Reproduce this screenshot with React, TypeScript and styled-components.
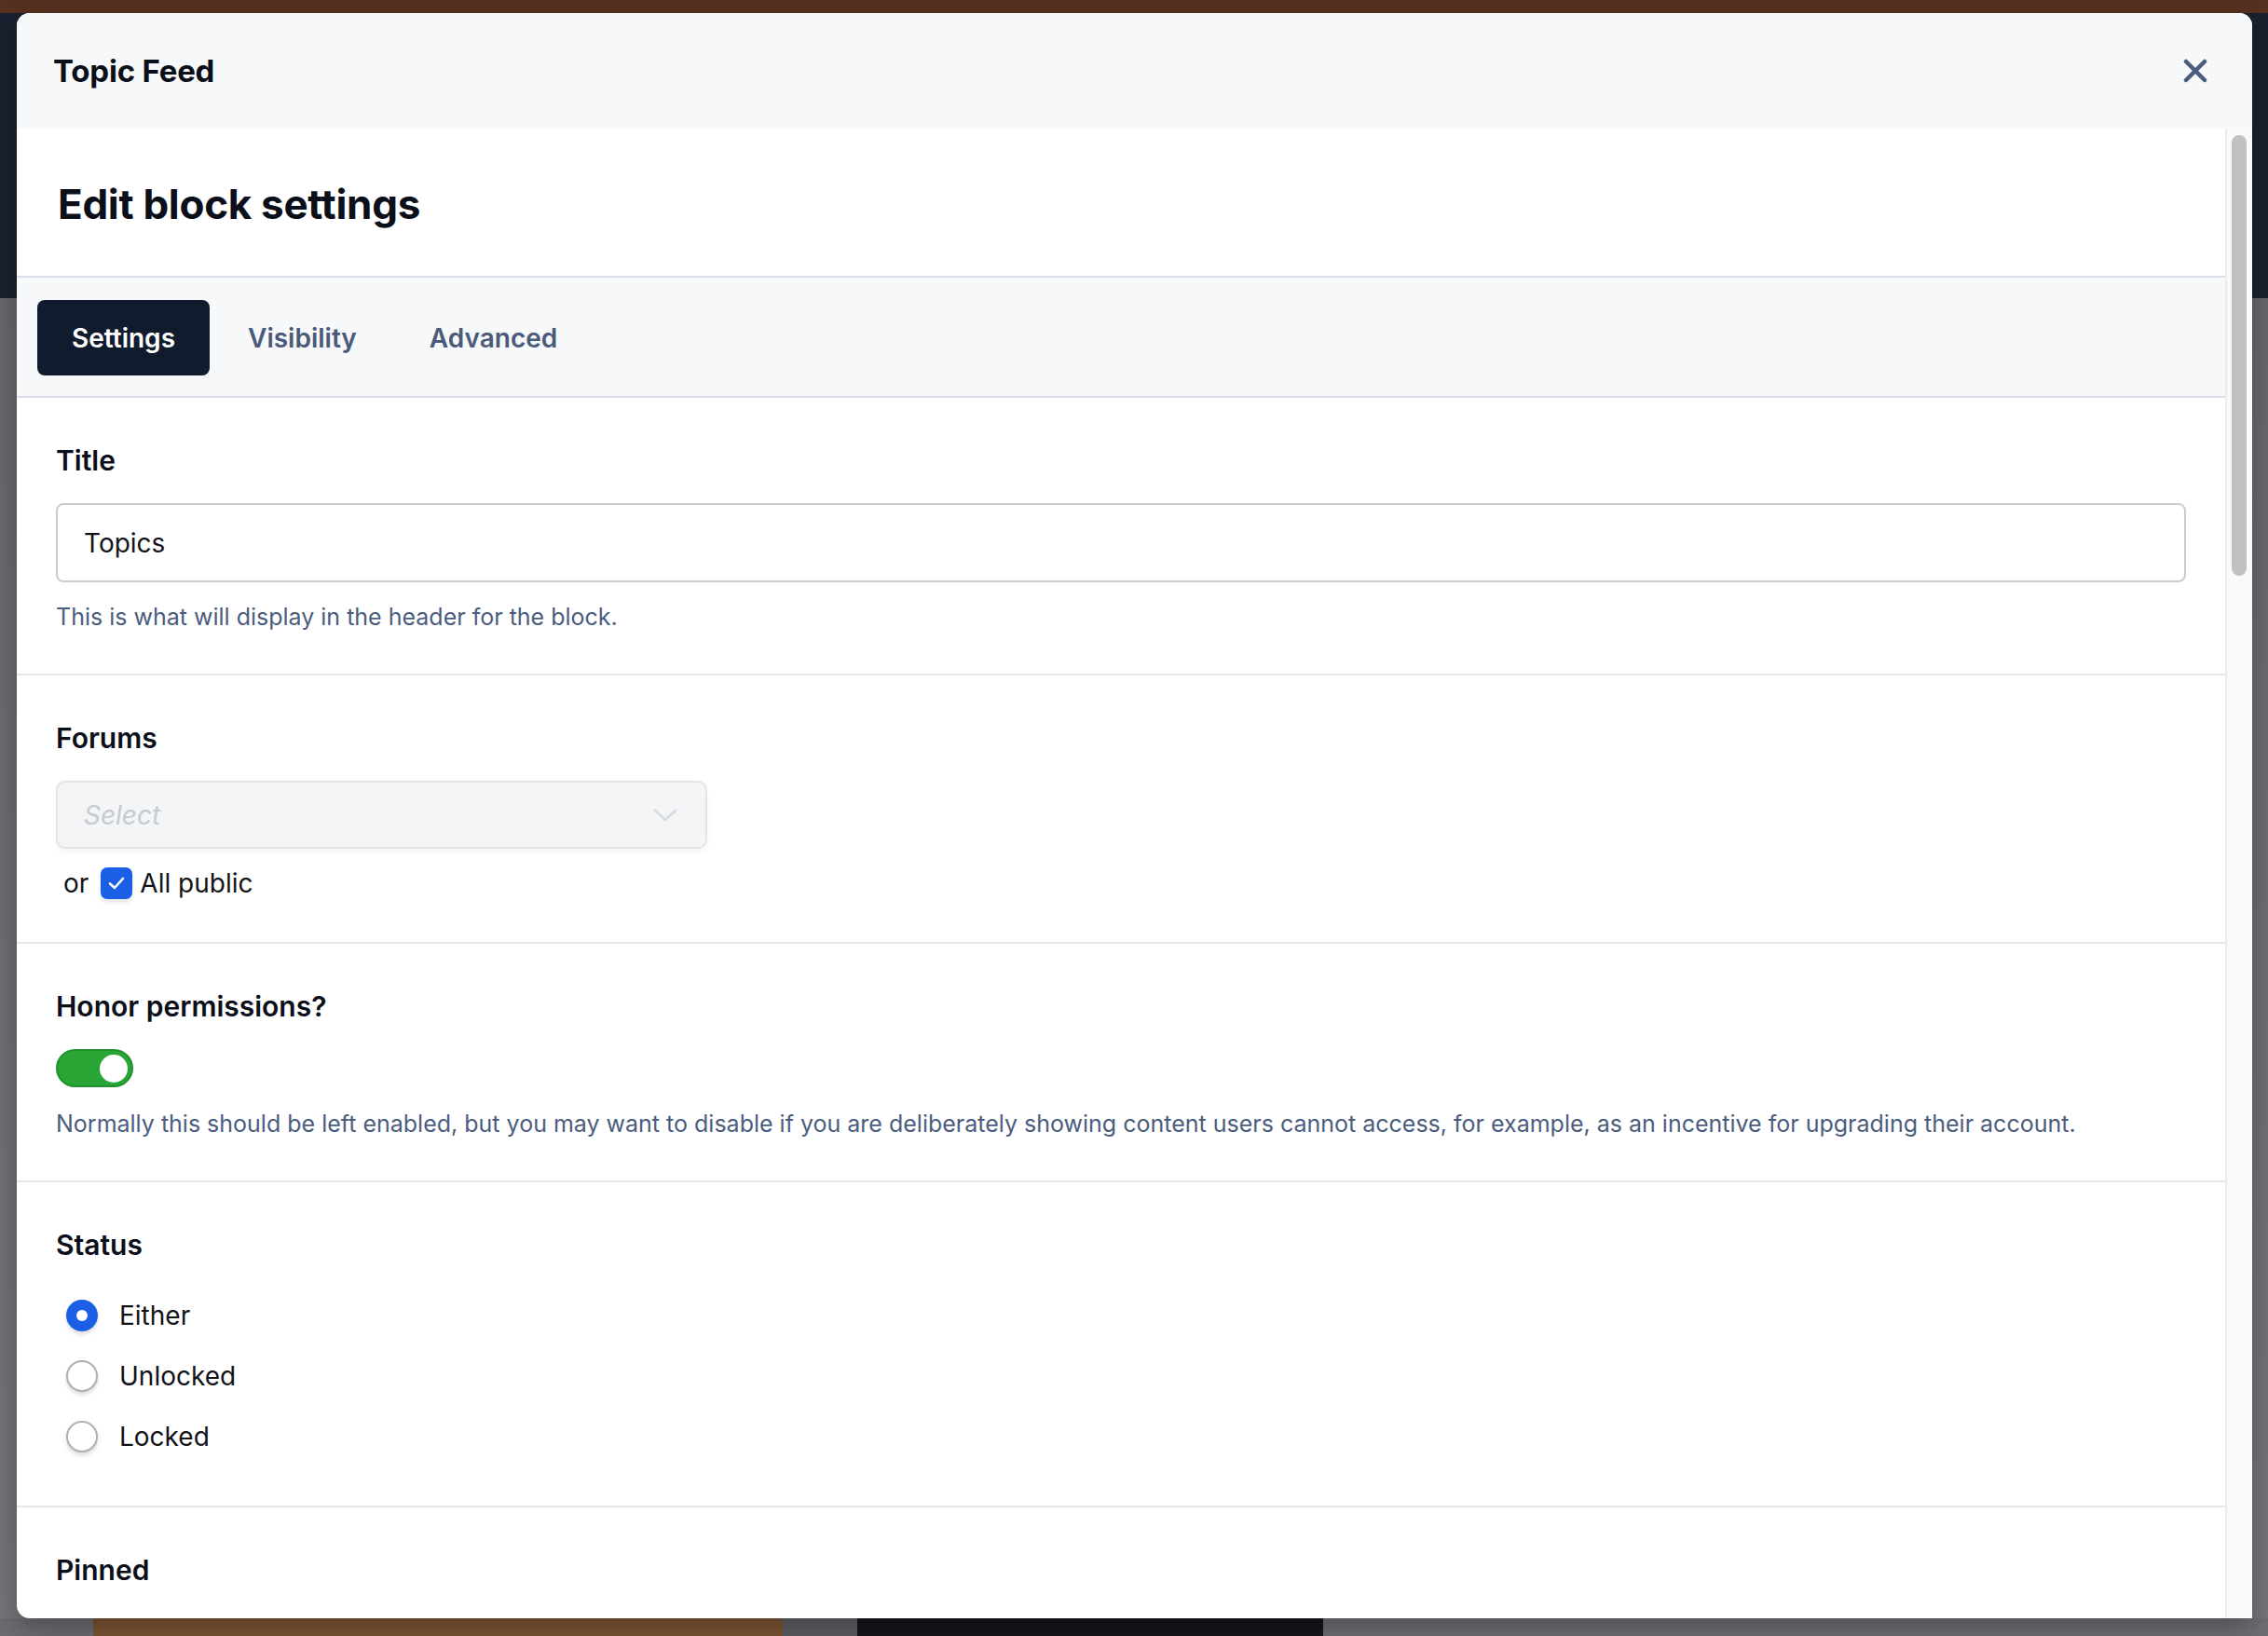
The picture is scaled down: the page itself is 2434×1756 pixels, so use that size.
import styled, { createGlobalStyle } from 'styled-components';

const GlobalStyle = createGlobalStyle`
  html, body {
    margin: 0;
    padding: 0;
  }
  body {
    font-family: Inter, 'Noto Sans', 'Liberation Sans', sans-serif;
    -webkit-font-smoothing: antialiased;
  }
  * {
    box-sizing: border-box;
  }
`;

// page behind the dialog, dimmed
const Backdrop = styled.div`
  width: 2434px;
  height: 1756px;
  padding: 14px 17px 19px 18px;
  display: flex;
  background:
    linear-gradient(
        to right,
        #6b6d72 0 100px,
        #7b5433 100px 840px,
        #5d5f63 840px 920px,
        #15161a 920px 1420px,
        #6d6f74 1420px
      )
      bottom / 100% 19px no-repeat,
    linear-gradient(
      to bottom,
      #57311f 0 14px,
      #1b2130 14px 320px,
      #66686d 320px,
      #74767b 100%
    );
`;

const Modal = styled.div`
  flex: 1;
  display: flex;
  flex-direction: column;
  background: #ffffff;
  border-radius: 14px 14px 0 14px;
  overflow: hidden;
  box-shadow: 0 10px 30px rgba(0, 0, 0, 0.3);
`;

const Header = styled.header`
  height: 124px;
  flex-shrink: 0;
  display: flex;
  align-items: center;
  justify-content: space-between;
  padding: 0 47px 0 39px;
  background: #f7f8fa;
`;

const HeaderTitle = styled.h2`
  margin: 0;
  font-size: 33px;
  font-weight: 700;
  color: #0b0f19;
  letter-spacing: -0.2px;
`;

const CloseButton = styled.button`
  border: none;
  background: none;
  padding: 0;
  width: 28px;
  height: 28px;
  display: flex;
  align-items: center;
  justify-content: center;
  color: #4b5d7e;
  cursor: pointer;
`;

const BodyRow = styled.div`
  flex: 1;
  min-height: 0;
  display: flex;
`;

const Content = styled.div`
  flex: 1;
  min-width: 0;
  overflow: hidden;
`;

const ScrollTrack = styled.div`
  width: 29px;
  flex-shrink: 0;
  background: #fafafa;
  border-left: 2px solid #ececec;
  padding: 7px 6px 0 5px;
`;

const ScrollThumb = styled.div<{ $size: number }>`
  height: ${(p) => p.$size}px;
  border-radius: 8px;
  background: #c1c1c1;
`;

const TitleBlock = styled.div`
  padding: 56px 44px 52px;
  border-bottom: 2px solid #d9dfe8;
`;

const PageTitle = styled.h1`
  margin: 0;
  font-size: 44px;
  line-height: 50px;
  font-weight: 700;
  color: #0b0f19;
  letter-spacing: -0.3px;
`;

const TabBar = styled.nav`
  display: flex;
  gap: 4px;
  padding: 24px 22px 22px;
  background: #f7f8fa;
  border-bottom: 2px solid #d9dfe8;
`;

const Tab = styled.button<{ $active?: boolean }>`
  height: 81px;
  padding: 0 37px;
  border: none;
  border-radius: 8px;
  font-family: inherit;
  font-size: 28px;
  font-weight: 600;
  background: ${(p) => (p.$active ? '#111b2e' : 'transparent')};
  color: ${(p) => (p.$active ? '#ffffff' : '#4a5a78')};
  cursor: pointer;
`;

const Section = styled.section`
  padding: 48px 42px 43px;
  border-bottom: 2px solid #e6e6e6;
`;

const Label = styled.div`
  font-size: 30px;
  line-height: 38px;
  font-weight: 600;
  color: #0b0f19;
  margin-bottom: 27px;
`;

const TextInput = styled.div`
  height: 85px;
  display: flex;
  align-items: center;
  padding: 0 28px;
  border: 2px solid #c9cdd3;
  border-radius: 8px;
  font-size: 28px;
  color: #111318;
`;

const Help = styled.p<{ $gap: number }>`
  margin: ${(p) => p.$gap}px 0 0;
  font-size: 25px;
  line-height: 36px;
  color: #4b5d7e;
`;

const SelectBox = styled.div`
  width: 699px;
  height: 73px;
  display: flex;
  align-items: center;
  justify-content: space-between;
  padding: 0 30px 0 28px;
  background: #f4f5f7;
  border: 2px solid #e2e4e8;
  border-radius: 10px;
  box-shadow: 0 3px 5px rgba(0, 0, 0, 0.05);
`;

const Placeholder = styled.span`
  font-size: 28px;
  font-style: italic;
  color: #c6cad1;
`;

const CheckRow = styled.div`
  margin-top: 17px;
  height: 40px;
  display: flex;
  align-items: center;
  padding-left: 8px;
  font-size: 28px;
  color: #111318;
`;

const CheckBox = styled.span`
  width: 34px;
  height: 34px;
  margin: 0 8px 0 13px;
  border-radius: 7px;
  background: #1b5fe6;
  display: inline-flex;
  align-items: center;
  justify-content: center;
  box-shadow: 0 3px 4px rgba(0, 0, 0, 0.12);
`;

const Toggle = styled.span<{ $on?: boolean }>`
  width: 83px;
  height: 41px;
  display: flex;
  align-items: center;
  justify-content: ${(p) => (p.$on ? 'flex-end' : 'flex-start')};
  padding: 0 4px;
  border-radius: 21px;
  background: ${(p) => (p.$on ? '#28a535' : '#d4d7dd')};
  border: 2px solid ${(p) => (p.$on ? '#23912e' : '#c4c7cd')};
`;

const Knob = styled.span`
  width: 30px;
  height: 30px;
  border-radius: 50%;
  background: #ffffff;
`;

const RadioGroup = styled.div`
  display: flex;
  flex-direction: column;
  gap: 25px;
  padding: 10px 0 11px;
`;

const RadioRow = styled.label`
  height: 40px;
  display: flex;
  align-items: center;
  gap: 23px;
  padding-left: 11px;
  font-size: 28px;
  color: #111318;
`;

const RadioDot = styled.span<{ $checked?: boolean }>`
  width: 34px;
  height: 34px;
  border-radius: 50%;
  display: flex;
  align-items: center;
  justify-content: center;
  background: ${(p) => (p.$checked ? '#1b5fe6' : '#ffffff')};
  border: ${(p) => (p.$checked ? 'none' : '2px solid #aeb0b4')};
  box-shadow: 0 3px 4px rgba(0, 0, 0, 0.14);

  &::after {
    content: '';
    display: ${(p) => (p.$checked ? 'block' : 'none')};
    width: 12px;
    height: 12px;
    border-radius: 50%;
    background: #ffffff;
  }
`;

const statusOptions = ['Either', 'Unlocked', 'Locked'];

export default function App() {
  return (
    <>
      <GlobalStyle />
      <Backdrop>
        <Modal>
          <Header>
            <HeaderTitle>Topic Feed</HeaderTitle>
            <CloseButton aria-label='Close'>
              <svg width='26' height='26' viewBox='0 0 26 26'>
                <path
                  d='M3 3 L23 23 M23 3 L3 23'
                  stroke='currentColor'
                  strokeWidth='4.5'
                  strokeLinecap='round'
                />
              </svg>
            </CloseButton>
          </Header>

          <BodyRow>
            <Content>
              <TitleBlock>
                <PageTitle>Edit block settings</PageTitle>
              </TitleBlock>

              <TabBar>
                <Tab $active>Settings</Tab>
                <Tab>Visibility</Tab>
                <Tab>Advanced</Tab>
              </TabBar>

              <Section>
                <Label>Title</Label>
                <TextInput>Topics</TextInput>
                <Help $gap={19}>This is what will display in the header for the block.</Help>
              </Section>

              <Section>
                <Label>Forums</Label>
                <SelectBox>
                  <Placeholder>Select</Placeholder>
                  <svg width='26' height='16' viewBox='0 0 26 16'>
                    <path
                      d='M2 3 L13 13 L24 3'
                      fill='none'
                      stroke='#d9dce1'
                      strokeWidth='3'
                      strokeLinecap='round'
                      strokeLinejoin='round'
                    />
                  </svg>
                </SelectBox>
                <CheckRow>
                  or
                  <CheckBox>
                    <svg width='20' height='16' viewBox='0 0 20 16'>
                      <path
                        d='M3 8.5 L8 13 L17 3'
                        fill='none'
                        stroke='#ffffff'
                        strokeWidth='2.6'
                        strokeLinecap='round'
                        strokeLinejoin='round'
                      />
                    </svg>
                  </CheckBox>
                  All public
                </CheckRow>
              </Section>

              <Section>
                <Label>Honor permissions?</Label>
                <Toggle $on>
                  <Knob />
                </Toggle>
                <Help $gap={21}>
                  Normally this should be left enabled, but you may want to disable if you are
                  deliberately showing content users cannot access, for example, as an incentive
                  for upgrading their account.
                </Help>
              </Section>

              <Section>
                <Label>Status</Label>
                <RadioGroup>
                  {statusOptions.map((opt, idx) => (
                    <RadioRow key={opt}>
                      <RadioDot $checked={idx === 0} />
                      {opt}
                    </RadioRow>
                  ))}
                </RadioGroup>
              </Section>

              <Section>
                <Label>Pinned</Label>
              </Section>
            </Content>

            <ScrollTrack>
              <ScrollThumb $size={473} />
            </ScrollTrack>
          </BodyRow>
        </Modal>
      </Backdrop>
    </>
  );
}
